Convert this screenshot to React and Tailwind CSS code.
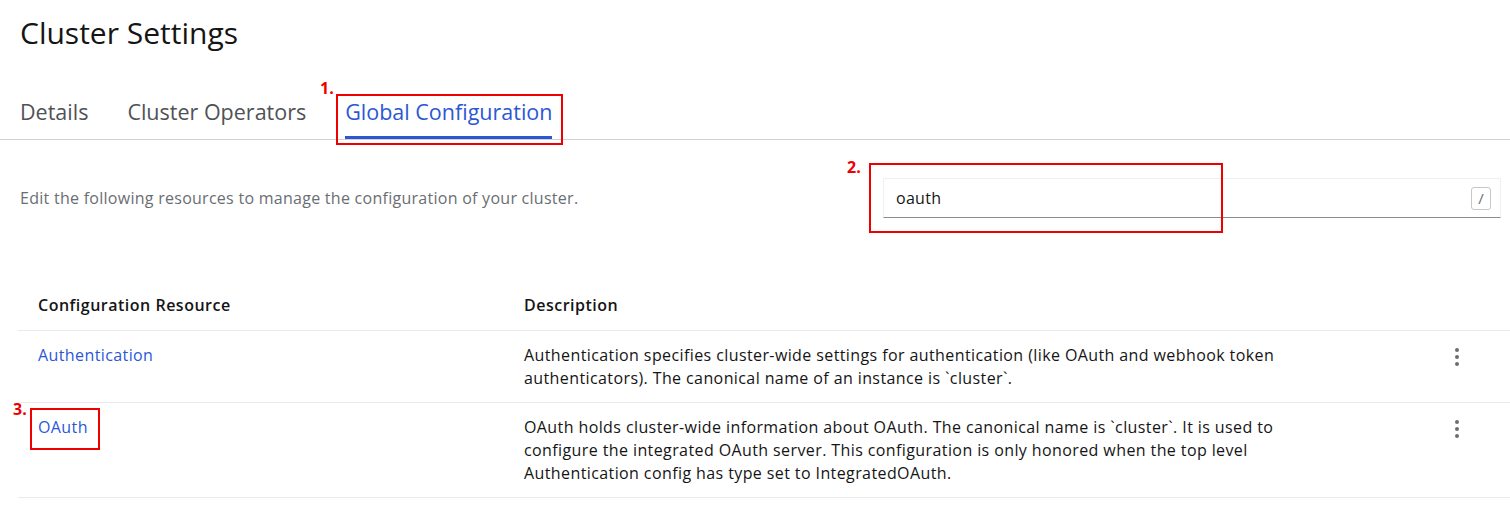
import React from "react";

const tabs = ["Details", "Cluster Operators", "Global Configuration"];

const rows = [
  {
    name: "Authentication",
    desc: "Authentication specifies cluster-wide settings for authentication (like OAuth and webhook token authenticators). The canonical name of an instance is `cluster`.",
  },
  {
    name: "OAuth",
    desc: "OAuth holds cluster-wide information about OAuth. The canonical name is `cluster`. It is used to configure the integrated OAuth server. This configuration is only honored when the top level Authentication config has type set to IntegratedOAuth.",
  },
];

const Kebab = () => (
  <button className="flex flex-col items-center gap-[3px] px-2 py-[1px]">
    <span className="w-[4px] h-[4px] rounded-full bg-[#6a6e73]" />
    <span className="w-[4px] h-[4px] rounded-full bg-[#6a6e73]" />
    <span className="w-[4px] h-[4px] rounded-full bg-[#6a6e73]" />
  </button>
);

// red callouts drawn over the screenshot
const Callout = ({ label, box, tag }) => (
  <>
    <div className={`absolute border-2 border-[#ee0000] ${box}`} />
    <span className={`absolute text-[16px] leading-[16px] font-bold text-[#ee0000] ${tag}`}>{label}</span>
  </>
);

export default function App() {
  return (
    <div className="relative w-[1510px] h-[505px] bg-white overflow-hidden font-['Open_Sans','Noto_Sans',sans-serif] text-[#151515]">
      <h1 className="px-5 pt-[14px] text-[30px] leading-[38px] font-normal">Cluster Settings</h1>

      <div className="mt-[46px] flex gap-[39px] px-5 border-b border-[#d2d2d2]">
        {tabs.map((t, i) => (
          <div
            key={t}
            className={`pb-[10px] text-[21.5px] leading-[28px] border-b-[3px] ${
              i === 2 ? "text-[#2b57d6] border-[#2b57d6]" : "text-[#4f5255] border-transparent"
            }`}
          >
            {t}
          </div>
        ))}
      </div>

      <div className="mt-[38px] flex items-center justify-between pl-5 pr-[9px]">
        <p className="text-[16px] tracking-[0.27px] text-[#6a6e73]">
          Edit the following resources to manage the configuration of your cluster.
        </p>
        <div className="w-[618px] h-[40px] flex items-center justify-between pl-[12px] pr-[9px] border border-[#f0f0f0] border-b-[#8a8d90]">
          <span className="text-[16px] tracking-[0.3px] text-[#151515]">oauth</span>
          <span className="w-[20px] h-[23px] flex items-center justify-center rounded-[3px] border border-[#c7c7c7] text-[15px] text-[#6a6e73]">
            /
          </span>
        </div>
      </div>

      <div className="ml-[18px] mt-[75px] text-[16px]">
        <div className="grid grid-cols-[486px_820px_1fr] border-b border-[#ebebeb] pb-[13px]">
          <div className="pl-5 leading-[24px] font-semibold tracking-[0.5px]">Configuration Resource</div>
          <div className="pl-5 leading-[24px] font-semibold tracking-[0.5px]">Description</div>
          <div />
        </div>
        {rows.map((r) => (
          <div key={r.name} className="grid grid-cols-[486px_820px_1fr] border-b border-[#ebebeb] pt-[13px] pb-[12px]">
            <div className="pl-5 leading-[23px] tracking-[0.4px]">
              <a className="text-[#2b57d6]">{r.name}</a>
            </div>
            <div className="px-5 leading-[23px] tracking-[0.4px] text-[#151515]">{r.desc}</div>
            <div className="flex justify-end pr-[43px] pt-[3px]">
              <Kebab />
            </div>
          </div>
        ))}
      </div>

      <Callout label="1." box="left-[336px] top-[94px] w-[227px] h-[51px]" tag="left-[320px] top-[80px]" />
      <Callout label="2." box="left-[869px] top-[163px] w-[354px] h-[70px]" tag="left-[847px] top-[159px]" />
      <Callout label="3." box="left-[30px] top-[408px] w-[70px] h-[42px]" tag="left-[13px] top-[401px]" />
    </div>
  );
}
